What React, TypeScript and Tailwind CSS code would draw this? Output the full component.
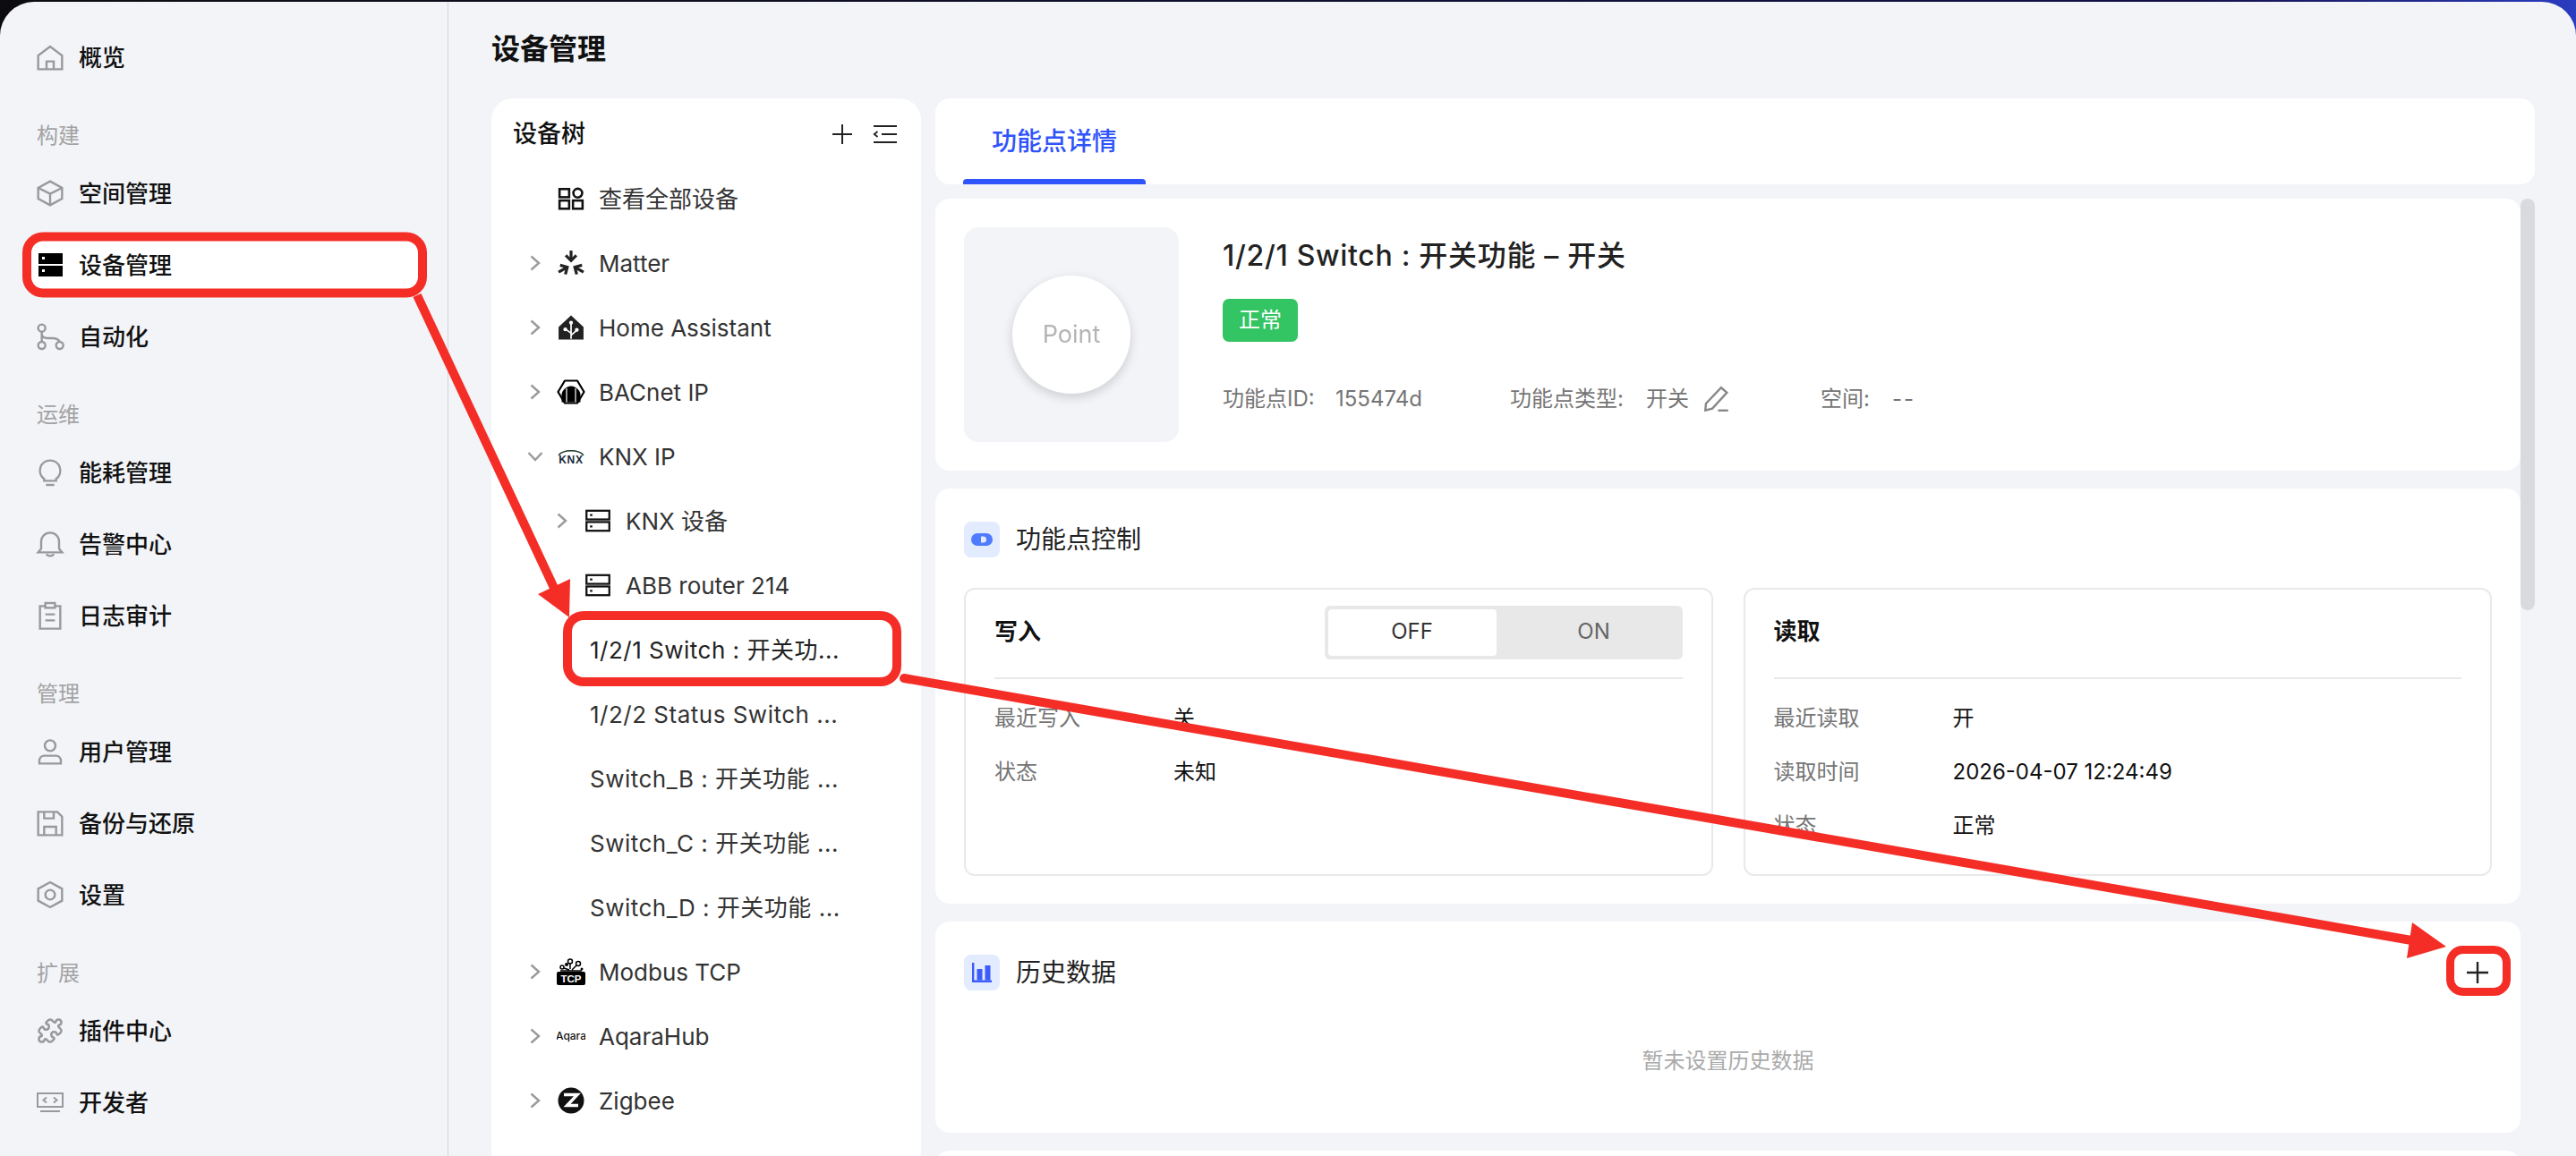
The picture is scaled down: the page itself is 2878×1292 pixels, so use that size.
import React from "react";
import { Puzzle } from "lucide-react";

const RED = "#f42e27";

function Stroke({ children }: { children: React.ReactNode }) {
  return (
    <svg viewBox="0 0 24 24" fill="none" stroke="#999" strokeWidth={1.8} className="size-[32px] shrink-0">
      {children}
    </svg>
  );
}

const navIcons: Record<string, React.ReactNode> = {
  home: (
    <Stroke>
      <path d="M2 22V10.5L12 3l10 7.5V22H2z" />
      <path d="M9 22v-6.5h6V22" />
    </Stroke>
  ),
  box: (
    <Stroke>
      <path d="M12 2l10 5.5v9L12 22 2 16.5v-9L12 2z" />
      <path d="M2 7.5l10 5 10-5M12 12.5V22" />
    </Stroke>
  ),
  server: (
    <svg viewBox="0 0 27 26" className="h-[26px] w-[27px] shrink-0">
      <rect x="0" y="0" width="27" height="12" fill="#000" />
      <rect x="0" y="14" width="27" height="12" fill="#000" />
      <rect x="4" y="4" width="3" height="3" fill="#fff" />
      <rect x="4" y="18" width="3" height="3" fill="#fff" />
    </svg>
  ),
  flow: (
    <Stroke>
      <circle cx="5" cy="5" r="3" />
      <circle cx="5" cy="19.5" r="3" />
      <circle cx="20" cy="19.5" r="3" />
      <path d="M5 8v8.5M5 10c0 2.5 2 3.5 5 3.5h4c3 0 5 1 6 3" />
    </Stroke>
  ),
  bulb: (
    <Stroke>
      <path d="M12 2a8.5 8.5 0 0 0-5 15.4V19h10v-1.6A8.5 8.5 0 0 0 12 2z" />
      <path d="M8.5 22.5h7" />
    </Stroke>
  ),
  bell: (
    <Stroke>
      <path d="M2 19l2.5-3v-6a7.5 7.5 0 0 1 15 0v6l2.5 3H2z" />
      <path d="M9 20.5c1 2 5 2 6 0" />
    </Stroke>
  ),
  clip: (
    <Stroke>
      <path d="M8 4H3.5v19h17V4H16" />
      <rect x="8" y="1.5" width="8" height="4" />
      <path d="M8 11h8M8 16h8" />
    </Stroke>
  ),
  user: (
    <Stroke>
      <circle cx="12" cy="7" r="4.5" />
      <path d="M3 22v-2.5a4 4 0 0 1 4-4h10a4 4 0 0 1 4 4V22H3z" />
    </Stroke>
  ),
  save: (
    <Stroke>
      <path d="M2 2.5h16l4 4V22H2V2.5z" />
      <path d="M7 2.5V8h8V2.5M7 22v-7h10v7" />
    </Stroke>
  ),
  gear: (
    <Stroke>
      <path d="M12 1.5l10 5.5v10l-10 5.5L2 17V7l10-5.5z" />
      <circle cx="12" cy="12" r="4" />
    </Stroke>
  ),
  plugin: <Puzzle className="size-[30px] shrink-0" stroke="#999" strokeWidth={2} />,
  dev: (
    <svg viewBox="0 0 30 24" fill="none" stroke="#999" strokeWidth={2} className="size-[30px] shrink-0">
      <rect x="1" y="2" width="28" height="15" />
      <path d="M11 6.5l-3.5 3 3.5 3M19 6.5l3.5 3-3.5 3M4 22h22" />
    </svg>
  ),
};

type NavEntry = { label: string; icon: string; active?: boolean };

const navGroups: { title?: string; items: NavEntry[] }[] = [
  { items: [{ label: "概览", icon: "home" }] },
  {
    title: "构建",
    items: [
      { label: "空间管理", icon: "box" },
      { label: "设备管理", icon: "server", active: true },
      { label: "自动化", icon: "flow" },
    ],
  },
  {
    title: "运维",
    items: [
      { label: "能耗管理", icon: "bulb" },
      { label: "告警中心", icon: "bell" },
      { label: "日志审计", icon: "clip" },
    ],
  },
  {
    title: "管理",
    items: [
      { label: "用户管理", icon: "user" },
      { label: "备份与还原", icon: "save" },
      { label: "设置", icon: "gear" },
    ],
  },
  {
    title: "扩展",
    items: [
      { label: "插件中心", icon: "plugin" },
      { label: "开发者", icon: "dev" },
    ],
  },
];

function Sidebar() {
  return (
    <aside className="flex w-[500px] shrink-0 flex-col px-[30px] pt-[30px]">
      {navGroups.map((group, i) => (
        <div key={i}>
          {group.title && (
            <div className="mt-[36px] mb-[12px] flex h-[40px] items-center pl-[11px] text-[24px] text-[#a3a3a3]">
              {group.title}
            </div>
          )}
          <div className="flex flex-col gap-[16px]">
            {group.items.map((item) => (
              <div
                key={item.label}
                className={`flex h-[64px] items-center rounded-[12px] text-[26px] font-medium text-[#111] ${item.active ? "bg-white" : ""}`}
              >
                <span className="mr-[6px] flex w-[52px] shrink-0 justify-center">{navIcons[item.icon]}</span>
                {item.label}
              </div>
            ))}
          </div>
        </div>
      ))}
    </aside>
  );
}

const ChevronR = () => (
  <svg viewBox="0 0 12 18" fill="none" stroke="#9a9a9a" strokeWidth={2.4} className="h-[18px] w-[12px]">
    <path d="M1.5 1.5L10 9l-8.5 7.5" />
  </svg>
);

const ChevronD = () => (
  <svg viewBox="0 0 18 12" fill="none" stroke="#9a9a9a" strokeWidth={2.4} className="h-[12px] w-[18px]">
    <path d="M1.5 2L9 10l7.5-8" />
  </svg>
);

const GridIcon = () => (
  <svg viewBox="0 0 28 24" fill="none" stroke="#111" strokeWidth={2.4} className="h-[26px] w-[30px]">
    <rect x="2" y="2" width="10" height="8.5" />
    <circle cx="21" cy="6.2" r="4.6" />
    <rect x="2" y="14" width="10" height="8.5" />
    <rect x="16" y="14" width="10" height="8.5" />
  </svg>
);

const MatterIcon = () => (
  <svg viewBox="0 0 28 26" fill="none" stroke="#222" strokeWidth={3} className="h-[28px] w-[30px]">
    {[0, 120, 240].map((a) => (
      <g key={a} transform={`rotate(${a} 14 15)`}>
        <path d="M14 0v10" />
        <path d="M8.5 5l5.5 5.5L19.5 5" />
      </g>
    ))}
  </svg>
);

const HaIcon = () => (
  <svg viewBox="0 0 28 26" className="h-[28px] w-[30px]">
    <path d="M14 0.5L27 12.5V25.5H1V12.5z" fill="#222" />
    <path d="M14 8v17M14 19l-6-4.5M14 21l6-5" stroke="#fff" strokeWidth={1.6} fill="none" />
    <circle cx="14" cy="8" r="2" fill="#fff" />
    <circle cx="8" cy="15" r="2" fill="#fff" />
    <circle cx="20" cy="15.5" r="2" fill="#fff" />
  </svg>
);

const BacnetIcon = () => (
  <svg viewBox="0 0 32 28" className="h-[28px] w-[32px]">
    <path d="M9 1.500h14L30.500 14 23 26.500H9L1.500 14z" fill="#fff" stroke="#000" strokeWidth={2.2} strokeLinejoin="round" />
    <path d="M5.500 25.500V17c0-4 5-9.500 10.500-9.500S26.500 13 26.500 17v8.500z" fill="#000" />
    <path d="M11 25.500V10M21 25.500V10" stroke="#fff" strokeWidth={1.2} />
  </svg>
);

const KnxIcon = () => (
  <svg viewBox="0 0 32 18" className="h-[20px] w-[34px]">
    <path d="M2 8C7 1 25 1 30 8" fill="none" stroke="#1c3a2c" strokeWidth={1.4} />
    <text x="16" y="16.500" textAnchor="middle" fontSize="12" fontWeight="700" fill="#16283a" fontFamily="Liberation Sans, sans-serif" letterSpacing="0.8">
      KNX
    </text>
  </svg>
);

const ServerOutline = () => (
  <svg viewBox="0 0 27 24" fill="none" stroke="#111" strokeWidth={2.2} className="h-[26px] w-[28px]">
    <rect x="1.200" y="1.200" width="24.600" height="9.400" />
    <rect x="1.200" y="13.400" width="24.600" height="9.400" />
    <path d="M5 5.900h2.500M5 18.100h2.500" />
  </svg>
);

const ModbusIcon = () => (
  <svg viewBox="0 0 32 30" className="h-[32px] w-[32px]">
    <rect x="0" y="15" width="32" height="15" rx="2" fill="#000" />
    <text x="16" y="27" textAnchor="middle" fontSize="11.500" fontWeight="700" fill="#fff" fontFamily="Liberation Sans, sans-serif">
      TCP
    </text>
    <g fill="none" stroke="#000" strokeWidth={1.5}>
      <circle cx="15" cy="3.500" r="2.500" />
      <circle cx="24" cy="6" r="2.500" />
      <circle cx="6" cy="10" r="2" />
      <path d="M15 6v6M22 8l-5 5M8 11l6 2M4 14h24" />
    </g>
    <circle cx="11" cy="7" r="2" fill="#000" />
    <circle cx="28" cy="12" r="1.500" fill="#000" />
  </svg>
);

const AqaraIcon = () => (
  <svg viewBox="0 0 32 14" className="h-[14px] w-[32px]">
    <text x="16" y="11" textAnchor="middle" fontSize="12" fontWeight="500" fill="#111" fontFamily="Inter, sans-serif">
      Aqara
    </text>
  </svg>
);

const ZigbeeIcon = () => (
  <svg viewBox="0 0 30 30" className="h-[30px] w-[30px]">
    <circle cx="15" cy="15" r="14.500" fill="#111" />
    <path d="M7 8.500h15L10.500 20.500H23" fill="none" stroke="#fff" strokeWidth={3.4} />
  </svg>
);

type TreeRow = {
  label: string;
  level: 0 | 1 | 2;
  icon?: React.ReactNode;
  chevron?: "right" | "down";
  selected?: boolean;
};

const treeRows: TreeRow[] = [
  { label: "查看全部设备", level: 0, icon: <GridIcon /> },
  { label: "Matter", level: 0, icon: <MatterIcon />, chevron: "right" },
  { label: "Home Assistant", level: 0, icon: <HaIcon />, chevron: "right" },
  { label: "BACnet IP", level: 0, icon: <BacnetIcon />, chevron: "right" },
  { label: "KNX IP", level: 0, icon: <KnxIcon />, chevron: "down" },
  { label: "KNX 设备", level: 1, icon: <ServerOutline />, chevron: "right" },
  { label: "ABB router 214", level: 1, icon: <ServerOutline /> },
  { label: "1/2/1 Switch : 开关功...", level: 2, selected: true },
  { label: "1/2/2 Status Switch ...", level: 2 },
  { label: "Switch_B : 开关功能 ...", level: 2 },
  { label: "Switch_C : 开关功能 ...", level: 2 },
  { label: "Switch_D : 开关功能 ...", level: 2 },
  { label: "Modbus TCP", level: 0, icon: <ModbusIcon />, chevron: "right" },
  { label: "AqaraHub", level: 0, icon: <AqaraIcon />, chevron: "right" },
  { label: "Zigbee", level: 0, icon: <ZigbeeIcon />, chevron: "right" },
];

function DeviceTree() {
  return (
    <section className="h-[1200px] w-[480px] shrink-0 rounded-[24px] bg-white">
      <div className="flex h-[80px] items-center justify-between pr-[26px] pl-[24px]">
        <h2 className="text-[27px] font-medium text-[#111]">设备树</h2>
        <div className="flex items-center gap-[22px]">
          <svg viewBox="0 0 24 24" fill="none" stroke="#222" strokeWidth={2} className="size-[24px]">
            <path d="M12 1v22M1 12h22" />
          </svg>
          <svg viewBox="0 0 28 24" fill="none" stroke="#222" strokeWidth={2.2} className="h-[24px] w-[28px]">
            <path d="M1 3h26M10 12h17M1 21h26" />
            <path d="M5.500 9L1.800 12l3.700 3" strokeWidth={1.8} />
          </svg>
        </div>
      </div>
      <div className="flex flex-col gap-[8px]">
        {treeRows.map((row) => (
          <div
            key={row.label}
            className={`flex h-[64px] items-center text-[26px] ${row.level === 1 ? "pl-[55px]" : row.level === 2 ? "pl-[110px]" : "pl-[25px]"}`}
          >
            {row.level < 2 ? (
              <>
                <span className="flex w-[48px] shrink-0 justify-center">
                  {row.chevron === "right" && <ChevronR />}
                  {row.chevron === "down" && <ChevronD />}
                </span>
                <span className="flex w-[32px] shrink-0 justify-center">{row.icon}</span>
                <span className="ml-[15px] text-[#333]">{row.label}</span>
              </>
            ) : (
              <span className={`tracking-[0.5px] ${row.selected ? "text-[#222]" : "text-[#333]"}`}>{row.label}</span>
            )}
          </div>
        ))}
      </div>
    </section>
  );
}

const ToggleGlyph = () => (
  <svg viewBox="0 0 24 14" className="h-[14px] w-[24px]">
    <rect width="24" height="14" rx="7" fill="#4f7bfe" />
    <path d="M11 3.500h2.500a3.500 3.500 0 0 1 0 7H11z" fill="#e3ebfe" />
  </svg>
);

const ChartGlyph = () => (
  <svg viewBox="0 0 24 24" className="size-[24px]">
    <path d="M1 1h2.400v19.600H23V23H1z" fill="#3c5dfb" />
    <rect x="6.500" y="8" width="6" height="12.600" fill="#3c5dfb" />
    <rect x="15.500" y="4" width="6" height="16.600" fill="#3c5dfb" />
  </svg>
);

function SectionHead({ icon, title }: { icon: React.ReactNode; title: string }) {
  return (
    <div className="flex items-center gap-[18px]">
      <span className="flex size-[40px] items-center justify-center rounded-[8px] bg-[#e3ebfe]">{icon}</span>
      <h3 className="text-[28px] text-[#222]">{title}</h3>
    </div>
  );
}

function KeyValue({ label, value }: { label: string; value: string }) {
  return (
    <div className="flex h-[60px] items-center text-[24px]">
      <span className="w-[200px] text-[#757575]">{label}</span>
      <span className="text-[#111]">{value}</span>
    </div>
  );
}

function Panel({ title, head, rows }: { title: string; head?: React.ReactNode; rows: [string, string][] }) {
  return (
    <div className="h-[322px] rounded-[12px] border-2 border-[#e8e9ec] px-[32px] pt-[18px]">
      <div className="flex h-[60px] items-center justify-between">
        <span className="pb-[3px] text-[26px] font-semibold text-[#111]">{title}</span>
        {head}
      </div>
      <div className="mt-[20px] mb-[14px] h-[2px] bg-[#e8e9ec]" />
      {rows.map(([label, value]) => (
        <KeyValue key={label} label={label} value={value} />
      ))}
    </div>
  );
}

function DetailColumn() {
  return (
    <div className="flex min-w-0 flex-1 flex-col gap-[16px]">
      <div className="h-[96px] rounded-[16px] bg-white pl-[31px]">
        <div className="relative flex h-full w-[204px] items-center justify-center text-[28px] font-medium text-[#2f54fb]">
          功能点详情
          <span className="absolute inset-x-0 bottom-0 h-[6px] rounded-t-[4px] bg-[#2f54fb]" />
        </div>
      </div>

      <div className="relative pr-[16px]">
        <div className="absolute top-0 right-0 h-[460px] w-[16px] rounded-full bg-[#d9dade]" />
        <div className="flex flex-col gap-[20px]">
          <div className="flex h-[304px] gap-[49px] rounded-[16px] bg-white p-[32px]">
            <div className="flex size-[240px] shrink-0 items-center justify-center rounded-[16px] bg-[#f2f4f8]">
              <div className="flex size-[132px] items-center justify-center rounded-full bg-white text-[27px] text-[#b4b4b4] shadow-[0_4px_12px_rgba(0,0,0,0.16)] blur-[0.4px]">
                Point
              </div>
            </div>
            <div className="pt-[10px]">
              <div className="h-[44px] text-[32px] leading-[44px] font-medium tracking-[0.7px] text-[#222]">1/2/1 Switch : 开关功能 – 开关</div>
              <div className="mt-[26px] flex h-[48px] w-[84px] items-center justify-center rounded-[7px] bg-[#33c463] text-[24px] text-white">
                正常
              </div>
              <div className="mt-[44px] flex h-[40px] items-center text-[24px] text-[#757575]">
                <div className="flex w-[321px] items-center">
                  <span className="w-[126px]">功能点ID:</span>
                  <span>155474d</span>
                </div>
                <div className="flex w-[347px] items-center">
                  <span className="w-[152px]">功能点类型:</span>
                  <span>开关</span>
                  <svg viewBox="0 0 24 24" fill="none" stroke="#888" strokeWidth={1.7} className="ml-[14px] size-[34px]">
                    <path d="M15.500 3l4.500 4L8.500 19.500 3 21l.5-5.500z" />
                    <path d="M13 21h8" />
                  </svg>
                </div>
                <span className="w-[80px]">空间:</span>
                <span className="tracking-[2px]">--</span>
              </div>
            </div>
          </div>

          <div className="h-[464px] rounded-[16px] bg-white px-[32px] pt-[36px]">
            <SectionHead icon={<ToggleGlyph />} title="功能点控制" />
            <div className="mt-[33px] grid grid-cols-2 gap-[34px]">
              <Panel
                title="写入"
                rows={[
                  ["最近写入", "关"],
                  ["状态", "未知"],
                ]}
                head={
                  <div className="flex h-[60px] w-[400px] items-center rounded-[6px] bg-[#e8e8e8] pl-[4px] text-[24px]">
                    <span className="flex h-[52px] w-[188px] items-center justify-center rounded-[4px] bg-white pb-[3px] text-[#333]">OFF</span>
                    <span className="flex h-[52px] flex-1 items-center justify-center pb-[3px] pl-[10px] text-[#666]">ON</span>
                  </div>
                }
              />
              <Panel
                title="读取"
                rows={[
                  ["最近读取", "开"],
                  ["读取时间", "2026-04-07 12:24:49"],
                  ["状态", "正常"],
                ]}
              />
            </div>
          </div>

          <div className="h-[236px] rounded-[16px] bg-white px-[32px] pt-[36px]">
            <div className="flex items-center justify-between">
              <SectionHead icon={<ChartGlyph />} title="历史数据" />
              <svg viewBox="0 0 24 24" fill="none" stroke="#222" strokeWidth={1.8} className="size-[32px]">
                <path d="M12 3v18M3 12h18" />
              </svg>
            </div>
            <div className="mt-[58px] flex h-[40px] items-center justify-center text-[24px] text-[#aaa]">暂未设置历史数据</div>
          </div>

          <div className="h-[200px] rounded-[16px] bg-white" />
        </div>
      </div>
    </div>
  );
}

// red callouts drawn on top of the screenshot
function Annotations() {
  return (
    <svg viewBox="0 0 2878 1292" fill="none" className="pointer-events-none absolute inset-0 h-[1292px] w-[2878px]">
      <rect x="30" y="264.500" width="442" height="63" rx="18" stroke={RED} strokeWidth={10} />
      <rect x="634" y="688" width="368" height="74" rx="18" stroke={RED} strokeWidth={10} />
      <rect x="2737.500" y="1061.500" width="63" height="47" rx="14" stroke={RED} strokeWidth={9} />
      <path d="M466 330L626 672" stroke={RED} strokeWidth={10} />
      <polygon points="636,690 637,647 601,664" fill={RED} />
      <path d="M1010 758L2700 1052" stroke={RED} strokeWidth={10} strokeLinecap="round" />
      <polygon points="2733,1058 2695,1031 2689,1071" fill={RED} />
    </svg>
  );
}

export default function App() {
  return (
    <div className="relative h-[1292px] w-[2878px] overflow-hidden bg-gradient-to-r from-[#0c0c10] via-[#141048] via-85% to-[#2a3cc0] [font-family:Inter,'Noto_Sans_CJK_SC',sans-serif]">
      <div className="mt-[2px] flex h-[1290px] rounded-t-[38px] bg-[#f2f4f8]">
        <Sidebar />
        <div className="w-[1px] shrink-0 bg-[#d2d4da]" />
        <main className="min-w-0 flex-1 pr-[46px] pl-[48px]">
          <h1 className="pt-[29px] pb-[31px] text-[32px] leading-[48px] font-semibold text-[#111]">设备管理</h1>
          <div className="flex gap-[16px]">
            <DeviceTree />
            <DetailColumn />
          </div>
        </main>
      </div>
      <Annotations />
    </div>
  );
}
